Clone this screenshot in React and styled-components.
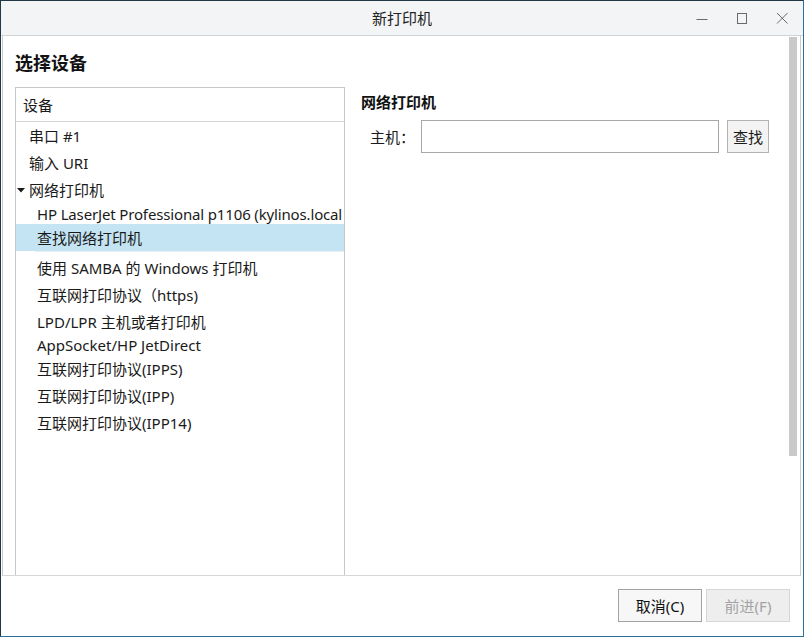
import React from "react";
import styled, { createGlobalStyle, css } from "styled-components";

const GlobalStyle = createGlobalStyle`
  html, body {
    margin: 0;
    padding: 0;
    background: #fff;
  }
  body {
    font-family: "Noto Sans", "Noto Sans CJK SC", sans-serif;
    color: #1a1a1a;
  }
`;

const items = [
  { label: "串口 #1", level: 0, height: 27 },
  { label: "输入 URI", level: 0, height: 27 },
  { label: "网络打印机", level: 0, height: 27, expanded: true },
  { label: "HP LaserJet Professional p1106 (kylinos.local", level: 1, height: 21, tight: true },
  { label: "查找网络打印机", level: 1, height: 27, selected: true },
  { divider: true },
  { label: "使用 SAMBA 的 Windows 打印机", level: 1, height: 27 },
  { label: "互联网打印协议（https)", level: 1, height: 27 },
  { label: "LPD/LPR 主机或者打印机", level: 1, height: 26 },
  { label: "AppSocket/HP JetDirect", level: 1, height: 21 },
  { label: "互联网打印协议(IPPS)", level: 1, height: 27 },
  { label: "互联网打印协议(IPP)", level: 1, height: 27 },
  { label: "互联网打印协议(IPP14)", level: 1, height: 27 },
];

const App = () => {
  return (
    <>
      <GlobalStyle />
      <Window>
        <TitleBar>
          <span />
          <Title>新打印机</Title>
          <Controls>
            <ControlBtn>
              <svg width="12" height="12" viewBox="0 0 12 12">
                <line x1="0.5" y1="7.5" x2="11.5" y2="7.5" stroke="#6a6a6a" strokeWidth="1" />
              </svg>
            </ControlBtn>
            <ControlBtn>
              <svg width="12" height="12" viewBox="0 0 12 12">
                <rect x="1.5" y="1.5" width="9" height="10" fill="none" stroke="#6a6a6a" strokeWidth="1" />
              </svg>
            </ControlBtn>
            <ControlBtn>
              <svg width="12" height="12" viewBox="0 0 12 12">
                <path d="M1 1 L11.5 11.5 M11.5 1 L1 11.5" stroke="#6a6a6a" strokeWidth="1" fill="none" />
              </svg>
            </ControlBtn>
          </Controls>
        </TitleBar>

        <Frame>
          <Main>
            <Heading>选择设备</Heading>
            <Split>
              <Tree>
                <TreeHeader>设备</TreeHeader>
                {items.map((it, i) =>
                  it.divider ? (
                    <Divider key={i} />
                  ) : (
                    <TreeRow
                      key={i}
                      $level={it.level}
                      $selected={it.selected}
                      $expandable={it.expanded}
                      $tight={it.tight}
                      style={{ height: it.height }}
                    >
                      {it.expanded && (
                        <Arrow width="8" height="5" viewBox="0 0 8 5">
                          <polygon points="0,0 8,0 4,4.5" fill="#1a1a1a" />
                        </Arrow>
                      )}
                      {it.label}
                    </TreeRow>
                  )
                )}
              </Tree>

              <Detail>
                <DetailTitle>网络打印机</DetailTitle>
                <FormRow>
                  <Label>主机：</Label>
                  <HostInput />
                  <SmallButton>查找</SmallButton>
                </FormRow>
              </Detail>
            </Split>
          </Main>
          <ScrollTrack>
            <ScrollThumb />
          </ScrollTrack>
        </Frame>

        <Footer>
          <DialogButton>取消(C)</DialogButton>
          <DialogButton $disabled>前进(F)</DialogButton>
        </Footer>
      </Window>
    </>
  );
};

export default App;

const Window = styled.div`
  width: 804px;
  height: 637px;
  box-sizing: border-box;
  border: 1px solid #213845;
  border-right-color: #2b6f9a;
  border-bottom-color: #2b6f9a;
  background: #fff;
  display: flex;
  flex-direction: column;
  overflow: hidden;
`;

const TitleBar = styled.div`
  height: 35px;
  box-sizing: border-box;
  border-bottom: 1px solid #d2d3d5;
  background: #f3f4f6;
  display: grid;
  grid-template-columns: 1fr auto 1fr;
  align-items: center;
  flex-shrink: 0;
`;

const Title = styled.div`
  font-size: 15px;
  color: #222;
  line-height: 20px;
  margin-top: -1px;
`;

const Controls = styled.div`
  display: flex;
  justify-content: flex-end;
  padding-right: 1px;
`;

const ControlBtn = styled.div`
  width: 40px;
  height: 34px;
  display: flex;
  align-items: center;
  justify-content: center;
`;

const Frame = styled.div`
  flex: 1;
  min-height: 0;
  display: flex;
  margin: 0 2px 0 1px;
  border-left: 1px solid #cacaca;
  border-right: 1px solid #cacaca;
  border-bottom: 1px solid #d6d6d6;
  overflow: hidden;
`;

const Main = styled.div`
  flex: 1;
  min-width: 0;
  padding: 15px 0 0 12px;
  display: flex;
  flex-direction: column;
`;

const Heading = styled.div`
  font-size: 18px;
  font-weight: 700;
  line-height: 24px;
  color: #111;
  margin-bottom: 12px;
`;

const Split = styled.div`
  display: flex;
  align-items: flex-start;
`;

const Tree = styled.div`
  width: 330px;
  height: 520px;
  box-sizing: border-box;
  border: 1px solid #c8c8c8;
  flex-shrink: 0;
  overflow: hidden;
`;

const TreeHeader = styled.div`
  height: 34px;
  box-sizing: border-box;
  border-bottom: 1px solid #d3d3d3;
  padding-left: 7px;
  display: flex;
  align-items: center;
  font-size: 15px;
`;

const TreeRow = styled.div`
  display: flex;
  align-items: center;
  white-space: nowrap;
  overflow: hidden;
  font-size: 15px;
  padding-left: ${(p) => (p.$level === 0 ? 13 : 21)}px;

  ${(p) =>
    p.$expandable &&
    css`
      padding-left: 1px;
    `}

  ${(p) =>
    p.$tight &&
    css`
      letter-spacing: -0.15px;
    `}

  ${(p) =>
    p.$selected &&
    css`
      background: #c4e4f3;
    `}
`;

const Arrow = styled.svg`
  margin: 1px 4px 0 0;
  flex-shrink: 0;
`;

const Divider = styled.div`
  height: 3px;
  margin-left: 19px;
  border-top: 1px solid #e7eff4;
  box-sizing: border-box;
`;

const Detail = styled.div`
  flex: 1;
  padding: 5px 20px 0 16px;
`;

const DetailTitle = styled.div`
  font-size: 15px;
  font-weight: 700;
  line-height: 20px;
  color: #111;
`;

const FormRow = styled.div`
  display: flex;
  align-items: center;
  margin-top: 8px;
`;

const Label = styled.div`
  width: 51px;
  margin-left: 9px;
  font-size: 15px;
`;

const HostInput = styled.div`
  width: 298px;
  height: 33px;
  box-sizing: border-box;
  border: 1px solid #a8a8a8;
  background: #fff;
  margin-right: 8px;
`;

const SmallButton = styled.div`
  width: 42px;
  height: 33px;
  box-sizing: border-box;
  border: 1px solid #b3b3b3;
  background: #f3f3f3;
  display: flex;
  align-items: center;
  justify-content: center;
  font-size: 15px;
`;

const ScrollTrack = styled.div`
  width: 11px;
  flex-shrink: 0;
  padding-top: 1px;
`;

const ScrollThumb = styled.div`
  width: 8px;
  height: 419px;
  background: #c9c9c9;
`;

const Footer = styled.div`
  height: 60px;
  flex-shrink: 0;
  box-sizing: border-box;
  padding: 13px 13px 0 0;
  display: flex;
  justify-content: flex-end;
  align-items: flex-start;
  gap: 4px;
`;

const DialogButton = styled.div`
  width: 84px;
  height: 33px;
  box-sizing: border-box;
  display: flex;
  align-items: center;
  justify-content: center;
  font-size: 15px;
  border: 1px solid #a3a3a3;
  background: #f7f7f7;
  color: #111;

  ${(p) =>
    p.$disabled &&
    css`
      border-color: #d6d6d6;
      background: #eeeeee;
      color: #a3a3a3;
    `}
`;
